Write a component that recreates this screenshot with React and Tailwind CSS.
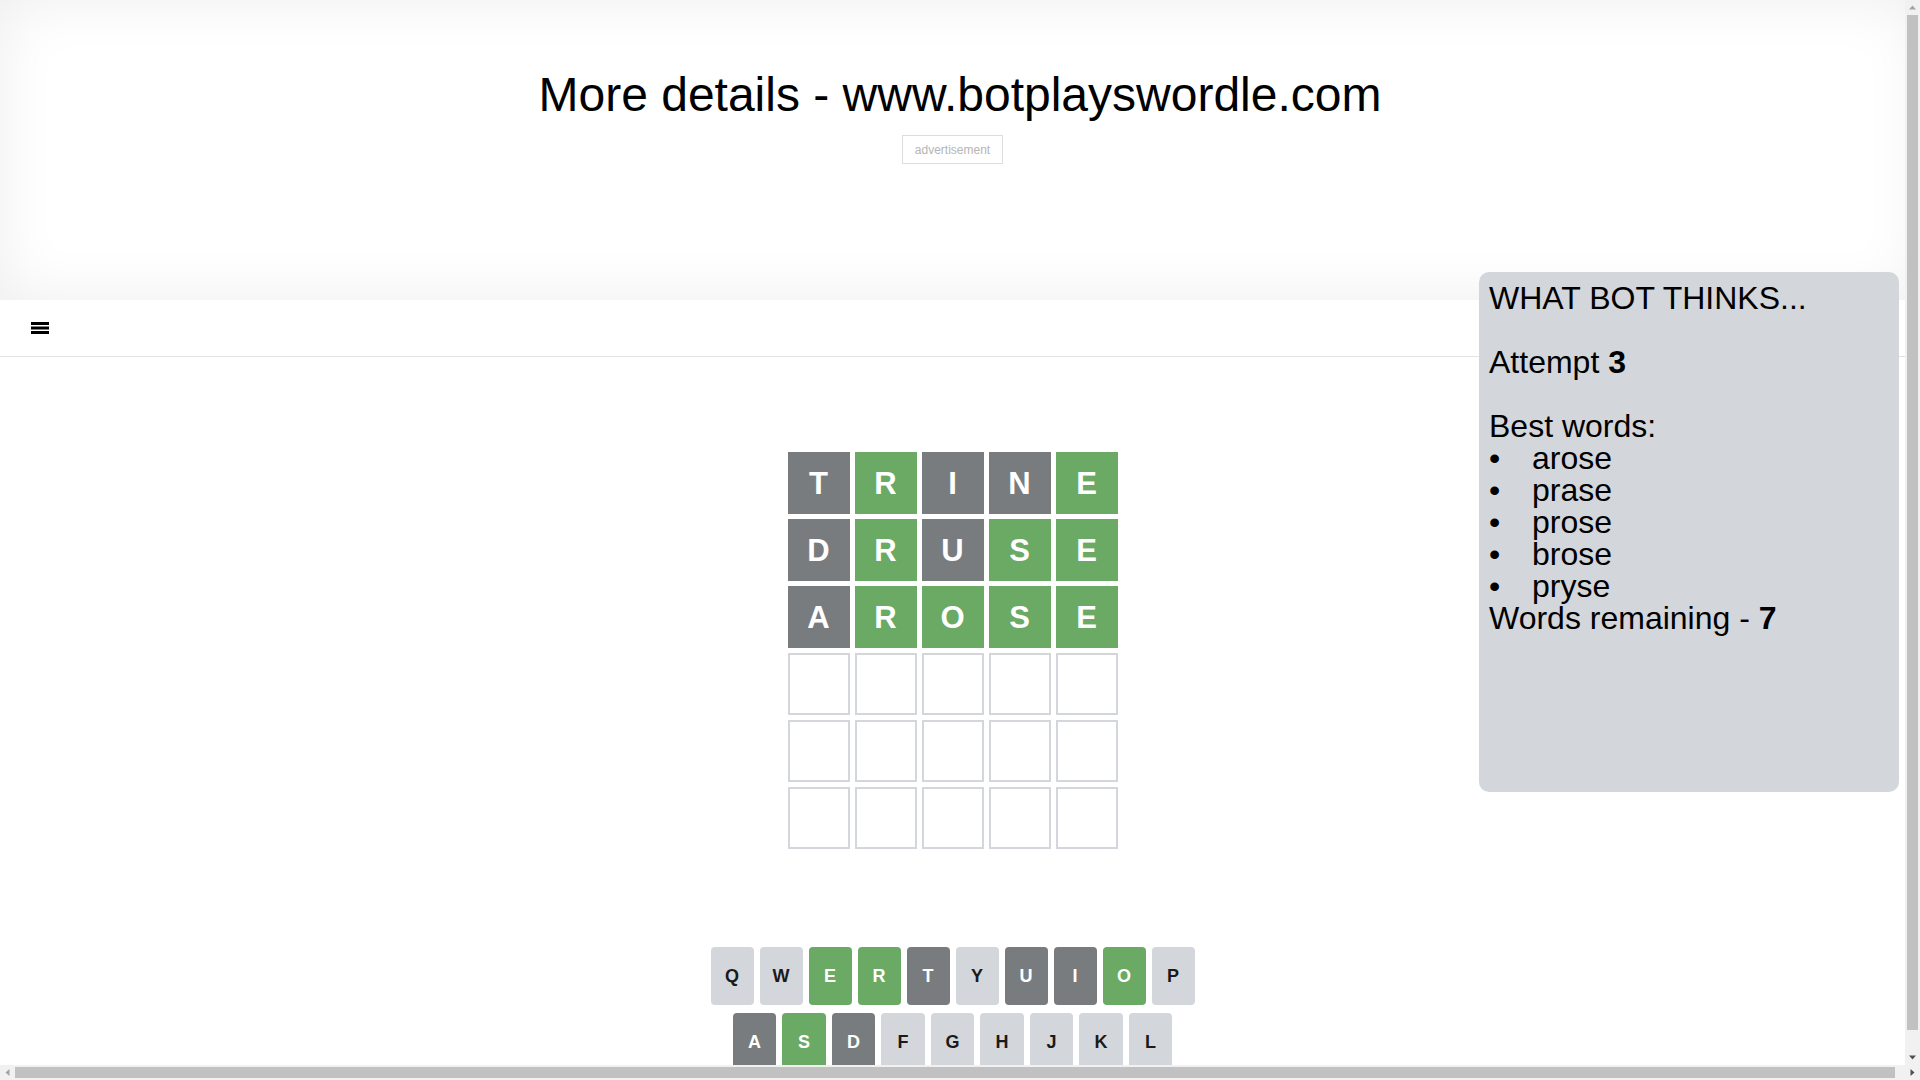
import React from 'react';

const GREEN = 'bg-[#6aaa64] border-[#6aaa64] text-white';
const GRAY = 'bg-[#787c7e] border-[#787c7e] text-white';

const guesses = [
  [['T', 'x'], ['R', 'c'], ['I', 'x'], ['N', 'x'], ['E', 'c']],
  [['D', 'x'], ['R', 'c'], ['U', 'x'], ['S', 'c'], ['E', 'c']],
  [['A', 'x'], ['R', 'c'], ['O', 'c'], ['S', 'c'], ['E', 'c']],
];

const keyState = {
  E: 'c', R: 'c', O: 'c', S: 'c',
  T: 'x', U: 'x', I: 'x', A: 'x', D: 'x', N: 'x',
};

const Tile = ({ letter, state }) => {
  const color = state === 'c' ? GREEN : state === 'x' ? GRAY : 'bg-white border-[#d3d6da]';
  return (
    <div className={`w-[62px] h-[62px] border-2 flex items-center justify-center text-[31px] leading-none font-bold uppercase ${color}`}>
      {letter}
    </div>
  );
};

const Key = ({ k, wide, w }) => {
  const s = keyState[k];
  const color = s === 'c' ? 'bg-[#6aaa64] text-white' : s === 'x' ? 'bg-[#787c7e] text-white' : 'bg-[#d3d6da] text-[#1a1a1b]';
  return (
    <div className={`${wide ? 'w-[65px] text-[12px]' : `${w} text-[18px]`} h-[58px] rounded-[4px] flex items-center justify-center font-bold uppercase ${color}`}>
      {k}
    </div>
  );
};

const MenuIcon = () => (
  <svg width="18" height="12" viewBox="0 0 18 12" fill="#000">
    <rect x="0" y="0" width="18" height="3" />
    <rect x="0" y="4.5" width="18" height="3" />
    <rect x="0" y="9" width="18" height="3" />
  </svg>
);

// browser scrollbars as they show in the screenshot
const Scrollbars = () => (
  <>
    <div className="fixed top-0 right-0 w-[15px] h-[1065px] bg-[#f1f1f1] z-20 flex flex-col items-center">
      <svg width="15" height="15" viewBox="0 0 15 15"><path d="M4 9.5h7L7.5 5.5z" fill="#a3a3a3" /></svg>
      <div className="w-[11px] h-[1015px] bg-[#c1c1c1]" />
      <div className="flex-1" />
      <svg width="15" height="15" viewBox="0 0 15 15"><path d="M4 5.5h7L7.5 9.5z" fill="#505050" /></svg>
    </div>
    <div className="fixed bottom-0 left-0 w-[1920px] h-[15px] bg-[#f1f1f1] z-20 flex items-center">
      <svg width="15" height="15" viewBox="0 0 15 15"><path d="M9.5 4v7L5.5 7.5z" fill="#a3a3a3" /></svg>
      <div className="w-[1880px] h-[11px] bg-[#c1c1c1]" />
      <div className="flex-1" />
      <svg width="15" height="15" viewBox="0 0 15 15"><path d="M5.5 4v7L9.5 7.5z" fill="#505050" /></svg>
    </div>
  </>
);

export default function App() {
  const rows = [...guesses];
  while (rows.length < 6) rows.push([['', ''], ['', ''], ['', ''], ['', ''], ['', '']]);

  return (
    <div className="relative w-[1905px] min-h-screen bg-white text-black font-['Liberation_Sans',Arial,sans-serif]">
      {/* Header / promo */}
      <div className="w-[1920px] h-[300px] bg-white shadow-[inset_0_0_60px_rgba(0,0,0,0.07)] pt-[67px]">
        <h1 className="text-[48px] leading-[55px] font-normal text-center">More details - www.botplayswordle.com</h1>
        <div className="w-[1905px] flex justify-center mt-[13px]">
          <div className="border border-[#dddddd] px-[12px] h-[29px] flex items-center text-[12px] text-[#b5b5b5]">
            advertisement
          </div>
        </div>
      </div>

      {/* Nav */}
      <div className="h-[57px] border-b border-[#e3e3e3] flex items-center pl-[31px]">
        <MenuIcon />
      </div>

      {/* Board */}
      <div className="h-[590px] flex justify-center pt-[95px]">
        <div className="flex flex-col gap-[5px]">
          {rows.map((row, i) => (
            <div key={i} className="flex gap-[5px]">
              {row.map(([l, s], j) => (
                <Tile key={j} letter={l} state={s} />
              ))}
            </div>
          ))}
        </div>
      </div>

      {/* Keyboard */}
      <div className="flex flex-col items-center gap-[8px] pb-[10px]">
        <div className="flex gap-[6px]">
          {'QWERTYUIOP'.split('').map((k) => <Key key={k} k={k} w="w-[43px]" />)}
        </div>
        <div className="flex gap-[6px]">
          {'ASDFGHJKL'.split('').map((k) => <Key key={k} k={k} w="w-[43.5px]" />)}
        </div>
        <div className="flex gap-[6px]">
          <Key k="Enter" wide />
          {'ZXCVBNM'.split('').map((k) => <Key key={k} k={k} w="w-[43px]" />)}
          <Key k="⌫" wide />
        </div>
      </div>

      {/* Bot panel */}
      <div className="absolute top-[272px] left-[1479px] w-[420px] h-[520px] rounded-[10px] bg-[#d3d6da] p-[10px] text-[32px] leading-[32px] z-10">
        <div>WHAT BOT THINKS...</div>
        <div className="h-[32px]" />
        <div>Attempt <b>3</b></div>
        <div className="h-[32px]" />
        <div>Best words:</div>
        <ul>
          {['arose', 'prase', 'prose', 'brose', 'pryse'].map((w) => (
            <li key={w} className="flex">
              <span className="w-[43px]">•</span>
              {w}
            </li>
          ))}
        </ul>
        <div>Words remaining - <b>7</b></div>
      </div>

      <Scrollbars />
    </div>
  );
}
